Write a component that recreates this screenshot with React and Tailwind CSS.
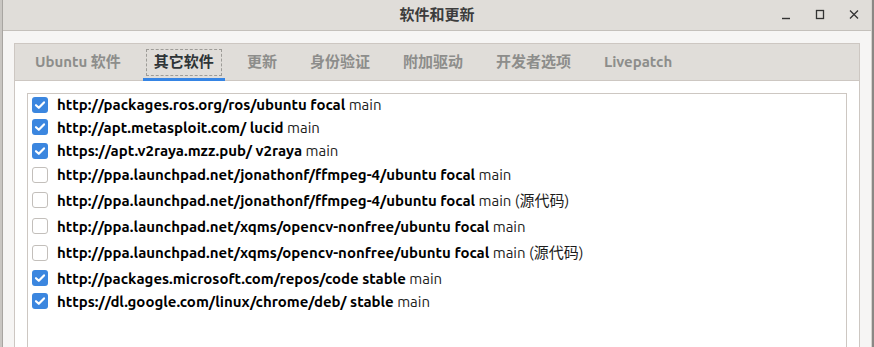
const FONT = { fontFamily: '"Ubuntu", "Noto Sans", "Noto Sans CJK SC", sans-serif' }

const sources = [
  { url: 'http://packages.ros.org/ros/ubuntu focal', comp: 'main', on: true, h: 'h-[21px]' },
  { url: 'http://apt.metasploit.com/ lucid', comp: 'main', on: true, h: 'h-[24px]' },
  { url: 'https://apt.v2raya.mzz.pub/ v2raya', comp: 'main', on: true, h: 'h-[23px]' },
  { url: 'http://ppa.launchpad.net/jonathonf/ffmpeg-4/ubuntu focal', comp: 'main', on: false, h: 'h-[25px]' },
  { url: 'http://ppa.launchpad.net/jonathonf/ffmpeg-4/ubuntu focal', comp: 'main (源代码)', on: false, h: 'h-[26px]' },
  { url: 'http://ppa.launchpad.net/xqms/opencv-nonfree/ubuntu focal', comp: 'main', on: false, h: 'h-[26px]' },
  { url: 'http://ppa.launchpad.net/xqms/opencv-nonfree/ubuntu focal', comp: 'main (源代码)', on: false, h: 'h-[27px]' },
  { url: 'http://packages.microsoft.com/repos/code stable', comp: 'main', on: true, h: 'h-[24px]' },
  { url: 'https://dl.google.com/linux/chrome/deb/ stable', comp: 'main', on: true, h: 'h-[22px]' },
]

const tabs = ['Ubuntu 软件', '其它软件', '更新', '身份验证', '附加驱动', '开发者选项', 'Livepatch']

function Check({ on }) {
  if (!on) {
    return <div className="w-[16px] h-[16px] rounded-[3px] border border-[#c3bfbb] bg-white shrink-0" />
  }
  return (
    <div className="w-[16px] h-[16px] rounded-[3px] bg-[#3b86df] flex items-center justify-center shrink-0">
      <svg width="12" height="12" viewBox="0 0 12 12">
        <path d="M2 6.2 L4.8 8.8 L10 3.4" fill="none" stroke="white" strokeWidth="2.2" strokeLinecap="round" strokeLinejoin="round" />
      </svg>
    </div>
  )
}

export default function App() {
  return (
    <div className="w-[874px] h-[347px] overflow-hidden flex bg-[#f6f5f4] text-[#2e3436]" style={FONT}>
      <div className="w-[3px] bg-[#c9c6c2] border-r border-[#a8a5a1]" />
      <div className="flex-1 flex flex-col">
        <div className="h-[31px] shrink-0 bg-[#e0ddd9] border-b border-[#c4c0bb] relative flex items-center justify-center">
          <span className="text-[15px] font-bold text-[#3c3c3c]">软件和更新</span>
          <div className="absolute right-[10px] top-0 h-full flex items-center gap-[20px] text-[#3c3c3c]">
            <svg width="14" height="14" viewBox="0 0 14 14"><path d="M3 10.5 H11" stroke="#333" strokeWidth="1.4" /></svg>
            <svg width="14" height="14" viewBox="0 0 14 14"><rect x="3.5" y="2.5" width="7" height="8" fill="none" stroke="#333" strokeWidth="1.3" /></svg>
            <svg width="14" height="14" viewBox="0 0 14 14"><path d="M3 2.5 L11 10.5 M11 2.5 L3 10.5" stroke="#333" strokeWidth="1.3" /></svg>
          </div>
        </div>
        <div className="flex-1 pt-[12px] pl-[11px] pr-[11px]">
          <div className="h-full border border-b-0 border-[#cdc7c2] flex flex-col">
            <div className="h-[37px] bg-[#e0ddd9] border-b border-[#cdc7c2] flex items-stretch pl-[9px] gap-[11px]">
              {tabs.map((t, i) => (
                <div key={t} className={`relative flex items-center px-[11px] text-[15px] font-bold ${i === 1 ? 'text-[#2e3436]' : 'text-[#8d8d8b]'}`}>
                  {i === 1 && (
                    <>
                      <div className="absolute left-[3px] right-[3px] top-[5px] bottom-[4px] border border-dashed border-[#9e9c98]" />
                      <div className="absolute left-0 right-0 bottom-[-1px] h-[3px] bg-[#3584e4]" />
                    </>
                  )}
                  <span className="relative">{t}</span>
                </div>
              ))}
            </div>
            <div className="flex-1 bg-white pt-[12px] px-[12px]">
              <div className="h-full border border-b-0 border-[#cdc7c2] bg-white flex flex-col">
                {sources.map((s, i) => (
                  <div key={i} className={`${s.h} flex items-center pl-[4px] gap-[9px] text-[15px]`}>
                    <Check on={s.on} />
                    <div className="whitespace-nowrap leading-none">
                      <span className="font-bold text-black">{s.url}</span>{' '}
                      <span className="text-[#1c1c1c]">{s.comp}</span>
                    </div>
                  </div>
                ))}
              </div>
            </div>
          </div>
        </div>
      </div>
      <div className="w-[3px] bg-[#8a8885] border-l border-[#d5d2ce]" />
    </div>
  )
}
